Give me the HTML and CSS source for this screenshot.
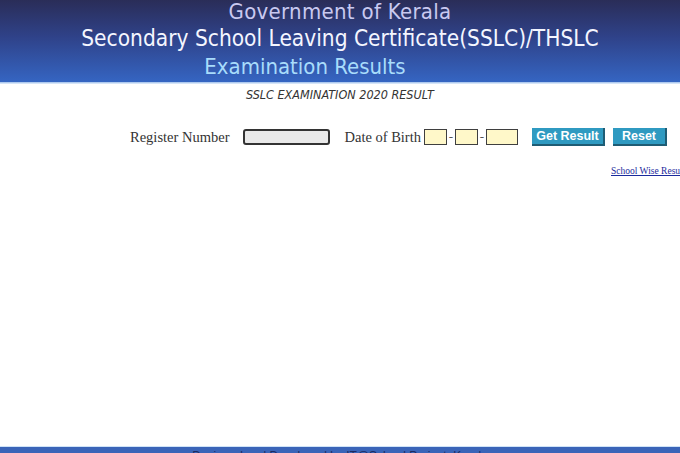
FILE: index.html
```html
<!DOCTYPE html>
<html>
<head>
<meta charset="utf-8">
<title>SSLC Examination Results</title>
<link rel="stylesheet" href="styles.css">
</head>
<body>
<div class="page">
  <header class="banner">
    <div class="line gov">Government of Kerala</div>
    <div class="line cert">Secondary School Leaving Certificate(SSLC)/THSLC</div>
    <div class="line exam">Examination Results</div>
  </header>
  <div class="rule"></div>
  <h1 class="title">SSLC EXAMINATION 2020 RESULT</h1>
  <form class="form">
    <label class="lbl">Register Number</label>
    <input class="regno" type="text">
    <label class="lbl dob">Date of Birth</label>
    <div class="dates">
      <input class="d dd" type="text">
      <span class="dash">-</span>
      <input class="d mm" type="text">
      <span class="dash">-</span>
      <input class="d yy" type="text">
    </div>
    <div class="btns">
      <button type="button" class="btn get">Get Result</button>
      <button type="button" class="btn reset">Reset</button>
    </div>
  </form>
  <div class="linkrow"><a href="#" class="link">School Wise Result</a></div>
  <footer class="footer">
    <div class="foottext">Designed and Developed by IT@School Project, Kerala</div>
  </footer>
</div>
</body>
</html>
```
FILE: styles.css
```css
html, body {
  margin: 0;
  padding: 0;
  background: #ffffff;
  overflow: hidden;
}
.page {
  width: 680px;
  height: 453px;
  display: flex;
  flex-direction: column;
  overflow: hidden;
}
.banner {
  height: 82px;
  background: linear-gradient(to bottom, #2a2d58 0%, #2f4289 45%, #3565c2 100%);
  font-family: "DejaVu Sans Condensed", "DejaVu Sans", sans-serif;
  text-align: center;
  box-sizing: border-box;
}
.line {
  white-space: nowrap;
}
.gov {
  color: #c9c9f0;
  font-size: 22px;
  letter-spacing: 0.3px;
  line-height: 24px;
}
.cert {
  color: #f4f6ff;
  font-size: 22.5px;
  line-height: 28px;
  margin-top: 0;
}
.exam {
  color: #a8dcfb;
  font-size: 22px;
  line-height: 27px;
  margin-top: 1px;
  padding-right: 70px;
}
.rule {
  height: 2px;
  background: linear-gradient(to bottom, #9cbcea, #e8f2fc);
}
.title {
  margin: 3px 0 0 0;
  font-family: "DejaVu Sans Condensed", "DejaVu Sans", sans-serif;
  font-style: italic;
  font-weight: normal;
  font-size: 12.5px;
  line-height: 16px;
  color: #333333;
  text-align: center;
}
.form {
  margin: 24px 0 0 0;
  padding-left: 130px;
  display: flex;
  align-items: center;
  height: 20px;
  font-family: "Liberation Serif", "Times New Roman", serif;
  font-size: 14.5px;
  color: #333333;
}
.lbl {
  white-space: nowrap;
}
.regno {
  margin: 0 0 0 14px;
  width: 87px;
  height: 16px;
  box-sizing: border-box;
  border: 2px solid #333333;
  border-radius: 3px;
  background: #e9e9e9;
  padding: 0;
}
.dob {
  margin-left: 14px;
}
.dates {
  display: flex;
  align-items: center;
  margin-left: 3px;
}
.d {
  height: 16px;
  box-sizing: border-box;
  border: 1px solid #3f3f3f;
  background: #fff8c9;
  padding: 0;
  margin: 0;
}
.dd, .mm {
  width: 23px;
}
.yy {
  width: 32px;
}
.dash {
  width: 8px;
  text-align: center;
  font-size: 13px;
  color: #555555;
}
.btns {
  display: flex;
  gap: 8px;
  margin-left: 14px;
}
.btn {
  height: 18px;
  padding: 0;
  margin: 0;
  box-sizing: border-box;
  border: none;
  border-right: 2px solid #1e5c74;
  border-bottom: 2px solid #1e5c74;
  background: #2f9ac1;
  color: #ffffff;
  font-family: "Liberation Sans", Arial, sans-serif;
  font-weight: bold;
  font-size: 12.5px;
  line-height: 16px;
}
.get {
  width: 73px;
}
.reset {
  width: 54px;
}
.linkrow {
  margin-top: 19px;
  padding-left: 611px;
  white-space: nowrap;
  font-family: "Liberation Serif", "Times New Roman", serif;
  font-size: 9.5px;
  line-height: 10px;
}
.link {
  color: #1a2a9c;
  text-decoration: underline;
}
.footer {
  margin-top: auto;
  height: 6px;
  border-top: 1px solid #cfe3f8;
  background: #3a64b8;
  overflow: hidden;
  flex-shrink: 0;
}
.foottext {
  padding-top: 2px;
  text-align: center;
  font-family: "Liberation Sans", Arial, sans-serif;
  font-size: 12px;
  color: #1c2a60;
  white-space: nowrap;
}
```
